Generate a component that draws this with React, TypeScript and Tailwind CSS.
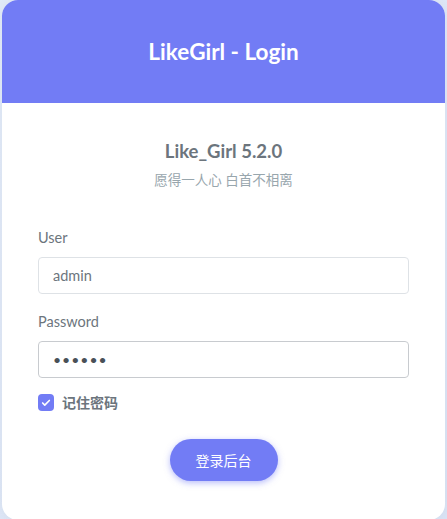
import { Check } from "lucide-react"

export default function App() {
    return (
        <div className="min-h-[519px] w-full bg-[linear-gradient(135deg,#e3ebf9,#dae4f6)] px-[2px] pb-[3px] [font-family:Lato,'Noto_Sans_CJK_SC',sans-serif]">
            <div className="w-full overflow-hidden rounded-2xl bg-white shadow-[0_0_12px_rgba(154,161,171,0.15)]">
                <div className="flex h-[103px] items-center justify-center bg-[#727cf5]">
                    <h1 className="text-[22.5px] font-bold text-white">LikeGirl - Login</h1>
                </div>

                <div className="px-9 pt-[36px] pb-[39px]">
                    <div className="flex flex-col items-center">
                        <h2 className="text-[18.5px] font-bold leading-6 text-[#6c757d]">Like_Girl 5.2.0</h2>
                        <p className="mt-[7px] text-[13.5px] text-[#98a6ad]">愿得一人心 白首不相离</p>
                    </div>

                    <div className="mt-[38px] flex flex-col">
                        <label className="text-[14.5px] leading-5 text-[#6c757d]">User</label>
                        <div className="mt-[9px] flex h-[37px] items-center rounded border border-[#dee2e6] px-[14px] text-[14.5px] text-[#6c757d]">admin</div>

                        <label className="mt-[18px] text-[14.5px] leading-5 text-[#6c757d]">Password</label>
                        <div className="mt-[9px] flex h-[37px] items-center rounded border border-[#c8cbcf] px-[14px] text-[14px] tracking-[1px] text-[#495057]">••••••</div>

                        <div className="mt-[14px] flex items-center gap-2">
                            <span className="flex h-[17px] w-[16px] items-center justify-center rounded bg-[#727cf5]">
                                <Check className="h-[10px] w-[10px] text-white" strokeWidth={4} />
                            </span>
                            <span className="text-[14px] font-bold text-[#6c757d]">记住密码</span>
                        </div>

                        <div className="mt-[26px] flex justify-center">
                            <button className="h-[42px] w-[108px] rounded-full bg-[#727cf5] text-[14px] text-white shadow-[0_2px_6px_0_rgba(114,124,245,0.5)]">登录后台</button>
                        </div>
                    </div>
                </div>
            </div>
        </div>
    )
}
